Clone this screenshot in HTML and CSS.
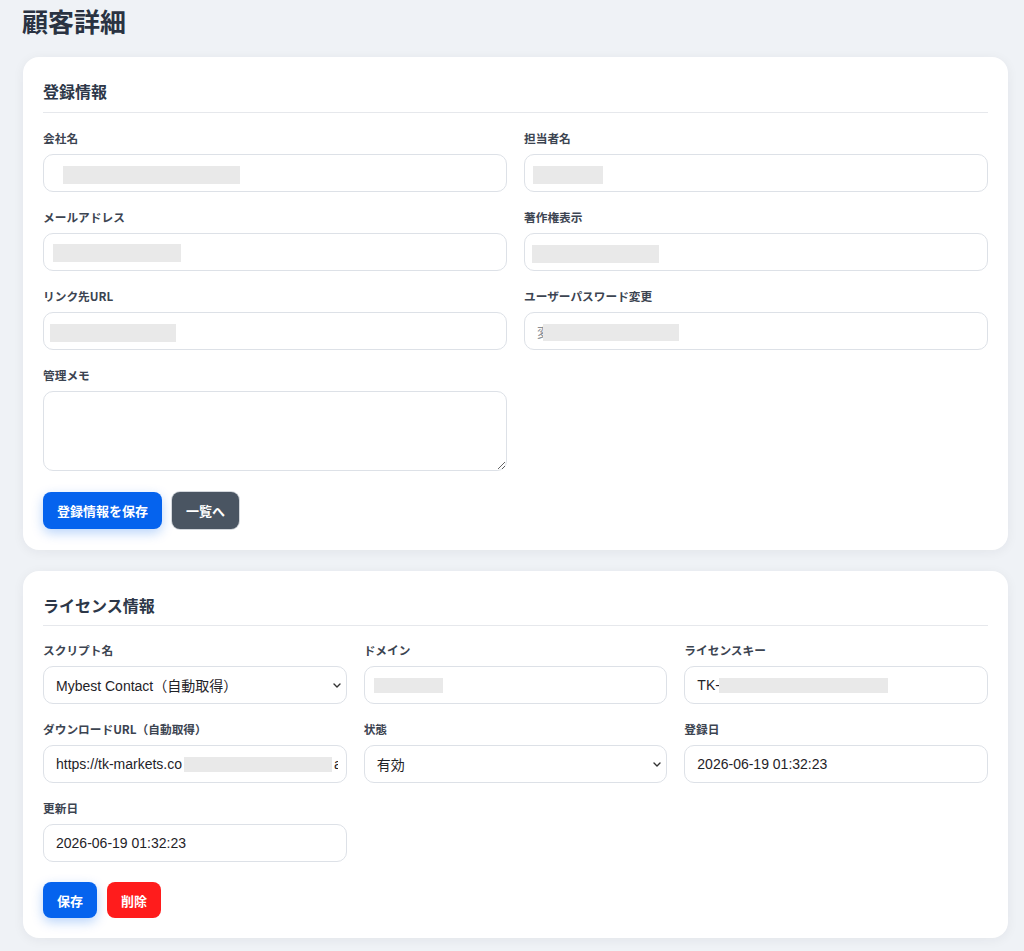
FILE: index.html
```html
<!DOCTYPE html>
<html lang="ja">
<head>
<meta charset="utf-8">
<title>顧客詳細</title>
<link rel="stylesheet" href="styles.css">
</head>
<body>
<main class="page">
  <h1 class="page-title">顧客詳細</h1>

  <section class="card">
    <h2 class="card-title">登録情報</h2>
    <div class="grid grid-2">
      <div class="field">
        <label class="label">会社名</label>
        <div class="control"><span class="redact r-company"></span></div>
      </div>
      <div class="field">
        <label class="label">担当者名</label>
        <div class="control"><span class="redact r-person"></span></div>
      </div>
      <div class="field">
        <label class="label">メールアドレス</label>
        <div class="control"><span class="redact r-mail"></span></div>
      </div>
      <div class="field">
        <label class="label">著作権表示</label>
        <div class="control"><span class="redact r-copy"></span></div>
      </div>
      <div class="field">
        <label class="label">リンク先URL</label>
        <div class="control"><span class="redact r-link"></span></div>
      </div>
      <div class="field">
        <label class="label">ユーザーパスワード変更</label>
        <div class="control"><span class="clip clip-pass">変</span><span class="redact r-pass"></span></div>
      </div>
      <div class="field">
        <label class="label">管理メモ</label>
        <textarea class="control memo"></textarea>
      </div>
    </div>
    <div class="actions">
      <button class="btn btn-primary">登録情報を保存</button>
      <button class="btn btn-secondary">一覧へ</button>
    </div>
  </section>

  <section class="card card-license">
    <h2 class="card-title">ライセンス情報</h2>
    <div class="grid grid-3">
      <div class="field">
        <label class="label">スクリプト名</label>
        <div class="control select"><span>Mybest Contact（自動取得）</span><svg class="chevron" width="8" height="5" viewBox="0 0 8 5"><path d="M1 1l3 3 3-3" fill="none" stroke="#333" stroke-width="1.4" stroke-linecap="round" stroke-linejoin="round"/></svg></div>
      </div>
      <div class="field">
        <label class="label">ドメイン</label>
        <div class="control"><span class="redact r-domain"></span></div>
      </div>
      <div class="field">
        <label class="label">ライセンスキー</label>
        <div class="control"><span>TK-</span><span class="redact r-key"></span></div>
      </div>
      <div class="field">
        <label class="label">ダウンロードURL（自動取得）</label>
        <div class="control"><span>https://tk-markets.co</span><span class="redact r-url"></span><span class="clip clip-url">a</span></div>
      </div>
      <div class="field">
        <label class="label">状態</label>
        <div class="control select"><span>有効</span><svg class="chevron" width="8" height="5" viewBox="0 0 8 5"><path d="M1 1l3 3 3-3" fill="none" stroke="#333" stroke-width="1.4" stroke-linecap="round" stroke-linejoin="round"/></svg></div>
      </div>
      <div class="field">
        <label class="label">登録日</label>
        <div class="control"><span>2026-06-19 01:32:23</span></div>
      </div>
      <div class="field">
        <label class="label">更新日</label>
        <div class="control"><span>2026-06-19 01:32:23</span></div>
      </div>
    </div>
    <div class="actions">
      <button class="btn btn-primary btn-sm">保存</button>
      <button class="btn btn-danger btn-sm">削除</button>
    </div>
  </section>
</main>
</body>
</html>
```

FILE: styles.css
```css
* { box-sizing: border-box; }

html, body { margin: 0; }

body {
  background: #eff2f6;
  font-family: "Liberation Sans", "Noto Sans CJK JP", sans-serif;
  color: #1f2328;
}

.page {
  width: 985px;
  margin-left: 23px;
  padding-bottom: 12px;
}

.page-title {
  font-family: "Noto Sans CJK JP", sans-serif;
  font-size: 26px;
  line-height: 32px;
  font-weight: 700;
  color: #2a3342;
  margin: 5px 0 20px -1px;
}

.card {
  background: #fff;
  border-radius: 16px;
  box-shadow: 0 2px 12px rgba(30, 41, 59, 0.06);
  padding: 24px 20px 21px;
  margin-bottom: 21px;
}

.card-license {
  padding-bottom: 20px;
}

.card-title {
  font-family: "Noto Sans CJK JP", sans-serif;
  font-size: 16px;
  line-height: 20px;
  font-weight: 700;
  color: #2d3748;
  margin: 0 0 17px;
  padding-bottom: 11px;
  border-bottom: 1px solid #e6e8ec;
}

.card-license .card-title {
  margin-bottom: 16px;
  padding-bottom: 10px;
}

.grid {
  display: grid;
  column-gap: 17px;
  row-gap: 16.6px;
}

.grid-2 { grid-template-columns: 1fr 1fr; }
.grid-3 { grid-template-columns: repeat(3, 1fr); }

.field { min-width: 0; }

.label {
  display: block;
  font-family: "Noto Sans CJK JP", sans-serif;
  font-size: 11.7px;
  line-height: 16px;
  font-weight: 700;
  color: #3c4451;
  margin-bottom: 8px;
}

.control {
  height: 38.4px;
  border: 1px solid #dde1e7;
  border-radius: 10px;
  background: #fff;
  padding: 0 12px;
  display: flex;
  align-items: center;
  font-size: 14px;
  color: #1f2328;
  overflow: hidden;
  white-space: nowrap;
}

.control.memo {
  display: block;
  width: 100%;
  height: 80px;
  resize: vertical;
  font-family: inherit;
  padding: 10px 12px;
}

.control.select {
  padding-right: 5px;
  justify-content: space-between;
}

.chevron { flex: none; }

.redact {
  display: inline-block;
  flex: none;
  height: 18px;
  background: #e9e9e9;
}

.r-company { width: 177px; margin-left: 7px; margin-top: 4px; }
.r-person { width: 70px; margin-left: -4px; margin-top: 4px; }
.r-mail { width: 128px; margin-left: -3px; margin-top: 2px; }
.r-copy { width: 127px; margin-left: -5px; margin-top: 4px; }
.r-link { width: 126px; margin-left: -6px; margin-top: 4px; }
.r-pass { width: 136px; height: 17px; margin-top: 2px; }
.r-domain { width: 69px; height: 15px; margin-left: -3px; }
.r-key { width: 169px; height: 15px; margin-left: -1px; }
.r-url { width: 148px; height: 15px; margin-left: 2px; }

.clip {
  display: inline-block;
  flex: none;
  overflow: hidden;
}

.clip-pass { width: 6px; color: #8a8f96; font-size: 13px; }
.clip-url { width: 4px; margin-left: 2px; }

.actions {
  display: flex;
  gap: 10px;
  margin-top: 21px;
}

.card-license .actions {
  margin-top: 20px;
}

.btn {
  height: 37px;
  padding: 0 14px;
  border: none;
  border-radius: 8px;
  font-family: "Noto Sans CJK JP", sans-serif;
  font-size: 13px;
  font-weight: 700;
  color: #fff;
  cursor: pointer;
}

.btn-sm {
  height: 36px;
}

.btn-primary {
  background: #0563ee;
  box-shadow: 0 4px 12px rgba(5, 99, 238, 0.28);
}

.btn-secondary {
  background: #4a5562;
  box-shadow: 0 0 0 1px #d3d7dc;
}

.btn-danger {
  background: #ff1c1c;
}
```
